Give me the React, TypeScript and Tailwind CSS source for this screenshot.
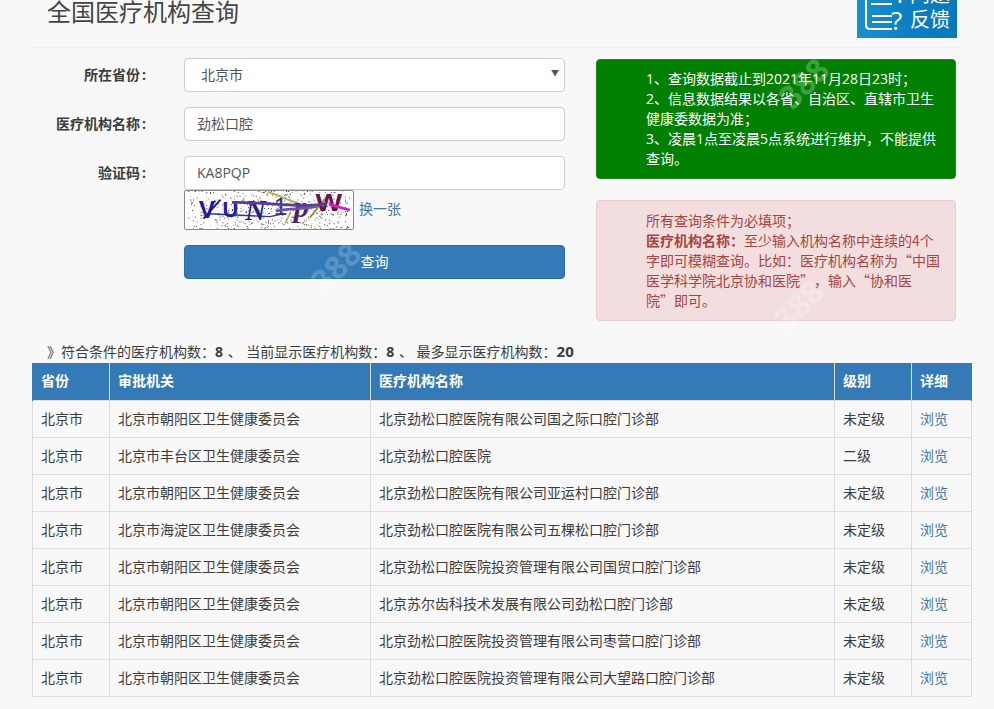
const rows = [
  ['北京市', '北京市朝阳区卫生健康委员会', '北京劲松口腔医院有限公司国之际口腔门诊部', '未定级'],
  ['北京市', '北京市丰台区卫生健康委员会', '北京劲松口腔医院', '二级'],
  ['北京市', '北京市朝阳区卫生健康委员会', '北京劲松口腔医院有限公司亚运村口腔门诊部', '未定级'],
  ['北京市', '北京市海淀区卫生健康委员会', '北京劲松口腔医院有限公司五棵松口腔门诊部', '未定级'],
  ['北京市', '北京市朝阳区卫生健康委员会', '北京劲松口腔医院投资管理有限公司国贸口腔门诊部', '未定级'],
  ['北京市', '北京市朝阳区卫生健康委员会', '北京苏尔齿科技术发展有限公司劲松口腔门诊部', '未定级'],
  ['北京市', '北京市朝阳区卫生健康委员会', '北京劲松口腔医院投资管理有限公司枣营口腔门诊部', '未定级'],
  ['北京市', '北京市朝阳区卫生健康委员会', '北京劲松口腔医院投资管理有限公司大望路口腔门诊部', '未定级'],
]

// speckle for the captcha background, a small hash so it doesn't form rows
const noise = (i: number) => {
  const v = Math.sin(i * 12.9898) * 43758.5453
  return v - Math.floor(v)
}
const dots = Array.from({ length: 520 }, (_, i) => ({
  x: Math.floor(noise(i + 1) * 170),
  y: Math.floor(noise(i + 1000) * 40),
  c: ['#333', '#666', '#c9c25a', '#444', '#a58ab8', '#222'][i % 6],
}))

function Captcha() {
  return (
    <svg width="170" height="40" viewBox="0 0 170 40" className="block rounded-[2px] border border-[#888] bg-white">
      {dots.map((d, i) => (
        <rect key={i} x={d.x} y={d.y} width="1" height="1" fill={d.c} />
      ))}
      <path d="M84 1 L118 14" stroke="#b5b04a" strokeWidth="2" fill="none" />
      <path d="M128 28 L146 6" stroke="#8f9a3a" strokeWidth="2" fill="none" />
      <path d="M102 34 L108 22" stroke="#b59a4a" strokeWidth="1.5" fill="none" />
      <path d="M22 24 L86 27 L100 24" stroke="#2a3a9a" strokeWidth="1.5" fill="none" />
      <path d="M16 29 L34 9" stroke="#1c1a9a" strokeWidth="2" fill="none" />
      <text x="11" y="28" fontSize="26" fontWeight="700" fill="#1c1a9a" fontFamily="Liberation Sans">V</text>
      <text x="36" y="27" fontSize="23" fontWeight="700" fill="#20209a" fontFamily="Liberation Sans">U</text>
      <text x="60" y="31" fontSize="30" fontWeight="700" fill="#2a1a8a" fontFamily="Liberation Serif" fontStyle="italic">N</text>
      <text x="90" y="25" fontSize="26" fontWeight="400" fill="#3a2a8a" fontFamily="Liberation Sans">1</text>
      <text x="111" y="27" fontSize="32" fontWeight="700" fill="#4a2060" fontFamily="Liberation Serif" fontStyle="italic">p</text>
      <text x="134" y="21" fontSize="26" fontWeight="700" fill="#6a1550" fontFamily="Liberation Sans" textLength="28" lengthAdjust="spacingAndGlyphs">W</text>
      <path d="M46 12 C80 11 120 19 146 13" stroke="#5b3a98" strokeWidth="3" fill="none" />
      <path d="M92 21 C110 18 125 19 136 16" stroke="#6a55a5" strokeWidth="3" fill="none" />
      <path d="M148 14 L170 20" stroke="#d020c0" strokeWidth="3" fill="none" />
    </svg>
  )
}

function FeedbackBanner() {
  return (
    <div className="relative h-[38px] w-[100px] overflow-hidden bg-gradient-to-r from-[#1a8fd0] via-[#0d7fc4] to-[#0a78b8]">
      <svg width="52" height="38" viewBox="0 0 52 38" className="absolute left-0 top-0">
        <path d="M9 -6 V25 Q9 29 13 29 H35" stroke="#fff" strokeWidth="2" fill="none" />
        <path d="M14 4 H35 M15 16 H35 M15 22 H35" stroke="#fff" strokeWidth="2" fill="none" />
        <path d="M43 -4 V3" stroke="#fff" strokeWidth="2.5" fill="none" />
      </svg>
      <span className="absolute left-[34px] top-[5px] text-[26px] leading-[30px] text-white">?</span>
      <span className="absolute left-[53px] top-[-17px] text-[20px] leading-[24px] text-white">问题</span>
      <span className="absolute left-[53px] top-[8px] text-[20px] leading-[24px] text-white">反馈</span>
    </div>
  )
}

function Watermark({ className }: { className: string }) {
  return (
    <span className={`pointer-events-none absolute -rotate-45 text-[32px] font-bold leading-none ${className}`}>
      388
    </span>
  )
}

export default function App() {
  return (
    <div className="relative h-[709px] w-[994px] overflow-hidden bg-[#f8f8f8] text-[14px] leading-[20px] text-[#3c3c3c] font-['Open_Sans','Noto_Sans_CJK_SC',sans-serif]">
      <div className="flex h-[47px] items-start justify-between pl-[47px] pr-[37px]">
        <h1 className="text-[24px] font-normal leading-[24px] text-[#444]">全国医疗机构查询</h1>
        <FeedbackBanner />
      </div>
      <div className="mx-[30px] h-px bg-[#eeeeee]" />

      <div className="flex px-[32px] pt-[10px]">
        {/* Form */}
        <div className="w-[533px]">
          <div className="flex items-center">
            <label className="w-[114px] text-right font-bold">所在省份<span className="ml-[2px]">:</span></label>
            <div className="relative ml-[38px] flex h-[34px] w-[381px] items-center rounded border border-[#ccc] bg-white pl-[16px] text-[#555]">
              北京市
              <span className="absolute right-[5px] top-[8px] text-[8px] leading-[12px] text-[#555]">▼</span>
            </div>
          </div>
          <div className="mt-[15px] flex items-center">
            <label className="w-[114px] text-right font-bold">医疗机构名称<span className="ml-[2px]">:</span></label>
            <div className="ml-[38px] flex h-[34px] w-[381px] items-center rounded border border-[#ccc] bg-white pl-[12px] text-[#555]">劲松口腔</div>
          </div>
          <div className="mt-[15px] flex items-center">
            <label className="w-[114px] text-right font-bold">验证码<span className="ml-[2px]">:</span></label>
            <div className="ml-[38px] flex h-[34px] w-[381px] items-center rounded border border-[#ccc] bg-white pl-[12px] text-[#555]">KA8PQP</div>
          </div>
          <div className="ml-[152px] flex items-center">
            <Captcha />
            <a className="mb-[3px] ml-[5px] text-[#3f78a8]">换一张</a>
          </div>
          <button className="ml-[152px] mt-[15px] flex h-[34px] w-[381px] items-center justify-center rounded border border-[#2e6da4] bg-[#337ab7] text-white">
            查询
          </button>
        </div>

        {/* Notices */}
        <div className="ml-[31px] mt-[1px] w-[360px]">
          <div className="rounded border border-[#1a8a1a] bg-[#008000] py-[9px] pl-[49px] pr-[15px] text-white">
            1、查询数据截止到2021年11月28日23时；<br />
            2、信息数据结果以各省、自治区、直辖市卫生健康委数据为准；<br />
            3、凌晨1点至凌晨5点系统进行维护，不能提供查询。
          </div>
          <div
            lang="zh-CN"
            className="mt-[21px] rounded border border-[#ebccd1] bg-[#f2dede] pb-[10px] pl-[49px] pr-[15px] pt-[9px] text-[#a94442] font-['Noto_Sans_CJK_SC',sans-serif] [text-spacing-trim:space-all]"
          >
            所有查询条件为必填项；<br />
            <b>医疗机构名称：</b>至少输入机构名称中连续的4个字即可模糊查询。比如：医疗机构名称为“中国医学科学院北京协和医院”，输入“协和医<br />
            院”即可。
          </div>
        </div>
      </div>

      {/* Results */}
      <p className="mt-[20px] pl-[47px]">
        》符合条件的医疗机构数：<b>8</b><span className="mx-[1px]"> 、 </span>当前显示医疗机构数：<b>8</b><span className="ml-[1px]"> 、 </span>最多显示医疗机构数：<b className="text-[15px]">20</b>
      </p>
      <table className="ml-[32px] mt-[1px] w-[939px] table-fixed border-collapse">
        <colgroup>
          <col className="w-[77px]" />
          <col className="w-[261px]" />
          <col className="w-[464px]" />
          <col className="w-[77px]" />
          <col className="w-[60px]" />
        </colgroup>
        <thead>
          <tr className="h-[37px] bg-[#337ab7] text-left text-white">
            <th className="border-x border-[#ddd] border-l-[#337ab7] px-2 font-bold">省份</th>
            <th className="border-x border-[#ddd] px-2 font-bold">审批机关</th>
            <th className="border-x border-[#ddd] px-2 font-bold">医疗机构名称</th>
            <th className="border-x border-[#ddd] px-2 font-bold">级别</th>
            <th className="border-x border-[#ddd] border-r-[#337ab7] px-2 font-bold">详细</th>
          </tr>
        </thead>
        <tbody>
          {rows.map((row, i) => (
            <tr key={i} className="h-[37px]">
              {row.map((cell, j) => (
                <td key={j} className="border border-[#ddd] px-2">{cell}</td>
              ))}
              <td className="border border-[#ddd] px-2 text-[#3f78a8]">浏览</td>
            </tr>
          ))}
        </tbody>
      </table>

      <Watermark className="left-[776px] top-[67px] text-[#ffffff]/25" />
      <Watermark className="left-[308px] top-[251px] text-[#ffffff]/20" />
      <Watermark className="left-[771px] top-[289px] text-[#ffffff]/25" />
    </div>
  )
}
